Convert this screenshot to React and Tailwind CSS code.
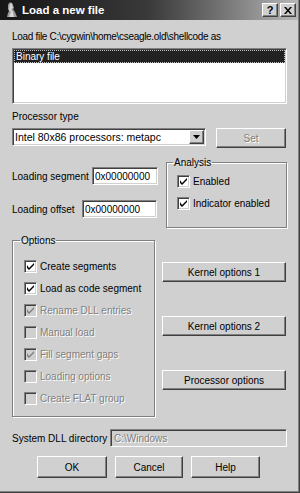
import React from 'react';

const sunken = 'border border-t-[#808080] border-l-[#808080] border-b-white border-r-white shadow-[inset_1px_1px_0_#404040,inset_-1px_-1px_0_#d0d0d0]';
const raised = 'border border-t-white border-l-white border-b-[#404040] border-r-[#404040] shadow-[inset_-1px_-1px_0_#808080]';
const etched = 'border border-[#808080] shadow-[1px_1px_0_#fff,inset_1px_1px_0_#fff]';
const disabledText = 'text-[#808080] [text-shadow:1px_1px_0_#fff]';

const Check = ({ checked, disabled }) => (
  <div
    className={`w-[13px] h-[13px] shrink-0 flex items-center justify-center ${sunken} ${
      disabled ? 'bg-[#d0d0d0]' : 'bg-white'
    }`}
  >
    {checked && (
      <svg width="7" height="7" viewBox="0 0 7 7">
        <path d="M0 2v3l2 2 5-5V0L2 5z" fill={disabled ? '#808080' : '#000'} />
      </svg>
    )}
  </div>
);

const CheckRow = ({ label, checked, disabled, className = '' }) => (
  <div className={`flex items-center gap-[3px] whitespace-nowrap ${className}`}>
    <Check checked={checked} disabled={disabled} />
    <span className={disabled ? disabledText : 'text-black'}>{label}</span>
  </div>
);

const Button = ({ children, className = '', disabled }) => (
  <div className={`flex items-center justify-center bg-[#d0d0d0] whitespace-nowrap ${raised} ${className}`}>
    <span className={disabled ? disabledText : 'text-black'}>{children}</span>
  </div>
);

const App = () => {
  const options = [
    { label: 'Create segments', checked: true },
    { label: 'Load as code segment', checked: true },
    { label: 'Rename DLL entries', checked: true, disabled: true },
    { label: 'Manual load', disabled: true },
    { label: 'Fill segment gaps', checked: true, disabled: true },
    { label: 'Loading options', disabled: true },
    { label: 'Create FLAT group', disabled: true }
  ];

  return (
    <div
      className="w-[300px] h-[493px] bg-[#d0d0d0] text-[10px] leading-[13px] text-black overflow-hidden shadow-[inset_-1px_-1px_0_#404040,inset_-2px_-2px_0_#808080]"
      style={{ fontFamily: '"Liberation Sans", Arial, sans-serif' }}
    >
      {/* Title bar */}
      <div className="h-[20px] mr-[2px] flex items-center bg-gradient-to-r from-[#161616] via-[#3a3a3a] to-[#b8b8b8]">
        <svg className="ml-[4px]" width="15" height="16" viewBox="0 0 15 16">
          <path d="M5 1c2-1 4 0 4 2l1 3-1 1 2 3 2 5H3l1-4 1-2-1-2 0-4z" fill="#9a9a9a" />
          <path d="M6 2c1-1 2 0 2 1l1 3-2 1 2 3 1 5H5l1-3 1-2-2-2z" fill="#d8d8d8" />
        </svg>
        <span className="ml-[3px] text-white font-bold text-[11.5px]">Load a new file</span>
        <div className="ml-auto mr-[2px] flex gap-[2px]">
          <div className={`w-[16px] h-[14px] bg-[#d0d0d0] ${raised} flex items-center justify-center text-[11px] font-bold leading-none`}>?</div>
          <div className={`w-[16px] h-[14px] bg-[#d0d0d0] ${raised} flex items-center justify-center`}>
            <svg width="8" height="7" viewBox="0 0 8 7">
              <path d="M0 0h2l2 2.5L6 0h2L5 3.5 8 7H6L4 4.5 2 7H0l3-3.5z" fill="#000" />
            </svg>
          </div>
        </div>
      </div>

      <div className="pl-[12px] pr-[13px]">
        <div className="mt-[10px] whitespace-nowrap tracking-[-0.3px]">Load file C:\cygwin\home\cseagle.old\shellcode as</div>

        {/* File type list */}
        <div className={`mt-[5px] h-[56px] bg-white p-[1px] ${sunken}`}>
          <div className="h-[13px] bg-[#222] text-white border border-dotted border-[#c0c0c0] pl-[1px] leading-[11px]">
            Binary file
          </div>
        </div>

        <div className="mt-[6px]">Processor type</div>

        <div className="mt-[5px] flex items-start">
          <div className={`w-[194px] h-[18px] bg-white flex items-center ${sunken}`}>
            <span className="pl-[2px] flex-1 whitespace-nowrap text-[10.5px]">Intel 80x86 processors: metapc</span>
            <div className={`w-[15px] h-[14px] mr-[1px] bg-[#d0d0d0] ${raised} flex items-center justify-center`}>
              <svg width="7" height="4" viewBox="0 0 7 4">
                <path d="M0 0h7L3.5 4z" fill="#000" />
              </svg>
            </div>
          </div>
          <Button disabled className="ml-[10px] w-[70px] h-[20px]">Set</Button>
        </div>

        {/* Loading + analysis */}
        <div className="mt-[8px] flex items-start">
          <div className="flex flex-col">
            <div className="mt-[11px] flex items-center">
              <span className="w-[80px] shrink-0 whitespace-nowrap">Loading segment</span>
              <div className={`w-[66px] h-[18px] bg-white flex items-center pl-[2px] ${sunken}`}>0x00000000</div>
            </div>
            <div className="mt-[15px] flex items-center">
              <span className="w-[70px] shrink-0 whitespace-nowrap">Loading offset</span>
              <div className={`w-[75px] h-[18px] bg-white flex items-center pl-[2px] ${sunken}`}>0x00000000</div>
            </div>
          </div>
          <fieldset className={`ml-auto w-[121px] h-[72px] ${etched}`}>
            <legend className="ml-[6px] px-[1px]">Analysis</legend>
            <CheckRow className="ml-[10px] mt-[6px]" label="Enabled" checked />
            <CheckRow className="ml-[10px] mt-[9px]" label="Indicator enabled" checked />
          </fieldset>
        </div>

        {/* Options + kernel buttons */}
        <div className="mt-[6px] flex items-start">
          <fieldset className={`w-[143px] h-[183px] ${etched}`}>
            <legend className="ml-[7px] px-[1px]">Options</legend>
            <div className="pt-[8px] pl-[11px]">
              {options.map((opt) => (
                <CheckRow key={opt.label} className="h-[22px]" {...opt} />
              ))}
            </div>
          </fieldset>
          <div className="ml-[7px] flex flex-col w-[124px]">
            <Button className="mt-[28px] h-[20px]">Kernel options 1</Button>
            <Button className="mt-[34px] h-[20px]">Kernel options 2</Button>
            <Button className="mt-[34px] h-[20px]">Processor options</Button>
          </div>
        </div>

        {/* System DLL directory */}
        <div className="mt-[12px] flex items-center">
          <span className="w-[98px] shrink-0 whitespace-nowrap">System DLL directory</span>
          <div className={`w-[177px] h-[18px] bg-[#d0d0d0] flex items-center pl-[3px] ${sunken}`}>
            <span className={disabledText}>C:\Windows</span>
          </div>
        </div>

        {/* Dialog buttons */}
        <div className="mt-[9px] pl-[25px] flex gap-[8px]">
          <Button className="w-[70px] h-[22px]">OK</Button>
          <Button className="w-[68px] h-[22px]">Cancel</Button>
          <Button className="w-[69px] h-[22px]">Help</Button>
        </div>
      </div>
    </div>
  );
};

export default App;
